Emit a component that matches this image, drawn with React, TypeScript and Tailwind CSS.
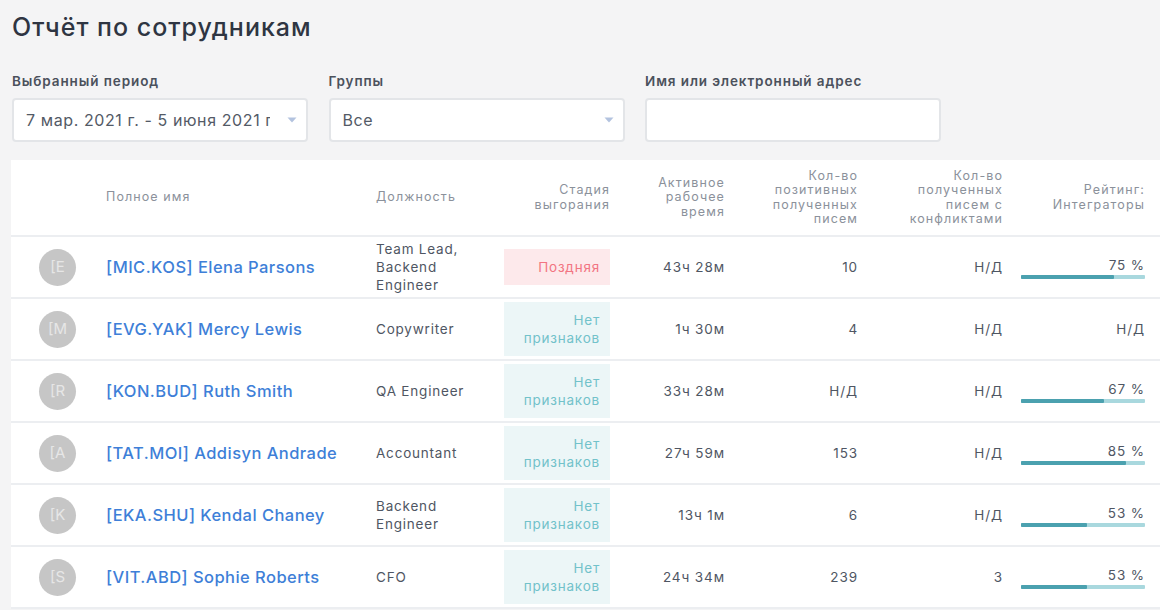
type Burnout = "late" | "none";

type Row = {
  initial: string;
  name: string;
  position: string;
  burnout: Burnout;
  active: string;
  positive: string;
  conflicts: string;
  rating: number | null;
};

const rows: Row[] = [
  { initial: "E", name: "[MIC.KOS] Elena Parsons", position: "Team Lead, Backend Engineer", burnout: "late", active: "43ч 28м", positive: "10", conflicts: "Н/Д", rating: 75 },
  { initial: "M", name: "[EVG.YAK] Mercy Lewis", position: "Copywriter", burnout: "none", active: "1ч 30м", positive: "4", conflicts: "Н/Д", rating: null },
  { initial: "R", name: "[KON.BUD] Ruth Smith", position: "QA Engineer", burnout: "none", active: "33ч 28м", positive: "Н/Д", conflicts: "Н/Д", rating: 67 },
  { initial: "A", name: "[TAT.MOI] Addisyn Andrade", position: "Accountant", burnout: "none", active: "27ч 59м", positive: "153", conflicts: "Н/Д", rating: 85 },
  { initial: "K", name: "[EKA.SHU] Kendal Chaney", position: "Backend Engineer", burnout: "none", active: "13ч 1м", positive: "6", conflicts: "Н/Д", rating: 53 },
  { initial: "S", name: "[VIT.ABD] Sophie Roberts", position: "CFO", burnout: "none", active: "24ч 34м", positive: "239", conflicts: "3", rating: 53 },
];

const grid = "grid grid-cols-[95px_270px_118px_116px_115px_133px_145px_157px] items-center";

function Caret() {
  return (
    <svg width="10" height="6" viewBox="0 0 10 6" className="shrink-0">
      <path d="M0.5 0.5 L9.5 0.5 L5 5.5 Z" fill="#b3c3df" />
    </svg>
  );
}

function Field({ label, value, caret }: { label: string; value?: string; caret?: boolean }) {
  return (
    <div className="w-[296px]">
      <div className="text-[13.5px] leading-[16px] tracking-[0.9px] font-semibold text-[#4b515c]">{label}</div>
      <div className="mt-[9px] h-[44px] bg-white border-2 border-[#e3e5e8] rounded-[4px] flex items-center pl-[12px] pr-[9px]">
        <div className="flex-1 overflow-hidden whitespace-nowrap text-[16px] tracking-[0.6px] text-[#535a66] mr-[17px]">{value}</div>
        {caret && <Caret />}
      </div>
    </div>
  );
}

function Badge({ kind }: { kind: Burnout }) {
  if (kind === "late") {
    return (
      <div className="w-[106px] ml-auto bg-[#fde9eb] text-[#f27582] text-[13.5px] tracking-[0.8px] leading-[18px] py-[9px] pr-[10px] text-right">
        Поздняя
      </div>
    );
  }
  return (
    <div className="w-[106px] ml-auto bg-[#ecf6f7] text-[#72c2ca] text-[13.5px] tracking-[0.8px] leading-[18px] py-[9px] pl-[10px] pr-[10px] text-right">
      Нет признаков
    </div>
  );
}

function Rating({ value }: { value: number | null }) {
  if (value === null) {
    return <div className="text-right">Н/Д</div>;
  }
  return (
    <div className="w-[124px] ml-auto pt-[1px]">
      <div className="text-right leading-[18px]">{value} %</div>
      <div className="mt-[1px] h-[4px] bg-[#a9d8de] rounded-[1px] flex items-center">
        <div className="h-[4px] bg-[#4ba1af] rounded-[1px]" style={{ width: `${value}%` }} />
      </div>
    </div>
  );
}

export default function App() {
  return (
    <div className="min-h-screen bg-[#f4f4f5] pl-[11px] pt-[11px] font-['Inter','Liberation_Sans',sans-serif] overflow-hidden">
      <h1 className="ml-px text-[25px] leading-[32px] tracking-[1px] font-medium text-[#2e3542]">Отчёт по сотрудникам</h1>

      <div className="mt-[30px] ml-px flex gap-[20.5px]">
        <Field label="Выбранный период" value="7 мар. 2021 г. - 5 июня 2021 г." caret />
        <Field label="Группы" value="Все" caret />
        <Field label="Имя или электронный адрес" />
      </div>

      <div className="mt-[18px] bg-white w-[1149px]">
        <div className={`${grid} h-[77px] border-b-2 border-[#eceef1] text-[12.5px] leading-[14.5px] tracking-[1.1px] text-[#8b919b]`}>
          <div />
          <div>Полное имя</div>
          <div>Должность</div>
          <div className="text-right">Стадия<br />выгорания</div>
          <div className="text-right">Активное<br />рабочее<br />время</div>
          <div className="text-right">Кол-во<br />позитивных<br />полученных<br />писем</div>
          <div className="text-right">Кол-во<br />полученных<br />писем с<br />конфликтами</div>
          <div className="text-right pr-[15px]">Рейтинг:<br />Интеграторы</div>
        </div>

        {rows.map((r) => (
          <div key={r.name} className={`${grid} h-[62px] border-b-2 border-[#eceef1] text-[13.5px] tracking-[0.9px] text-[#4f5663]`}>
            <div className="pl-[28px]">
              <div className="w-[37px] h-[37px] rounded-full bg-[#c6c6c6] flex items-center justify-center text-[15px] tracking-normal text-[#e6e6e6]">
                [{r.initial}
              </div>
            </div>
            <div className="text-[16.5px] tracking-[0.45px] font-medium text-[#3e7fd8] whitespace-nowrap">{r.name}</div>
            <div className="w-[95px] leading-[18px] tracking-[0.8px]">{r.position}</div>
            <div><Badge kind={r.burnout} /></div>
            <div className="text-right">{r.active}</div>
            <div className="text-right">{r.positive}</div>
            <div className="text-right">{r.conflicts}</div>
            <div className="pr-[15px]"><Rating value={r.rating} /></div>
          </div>
        ))}
      </div>
    </div>
  );
}
